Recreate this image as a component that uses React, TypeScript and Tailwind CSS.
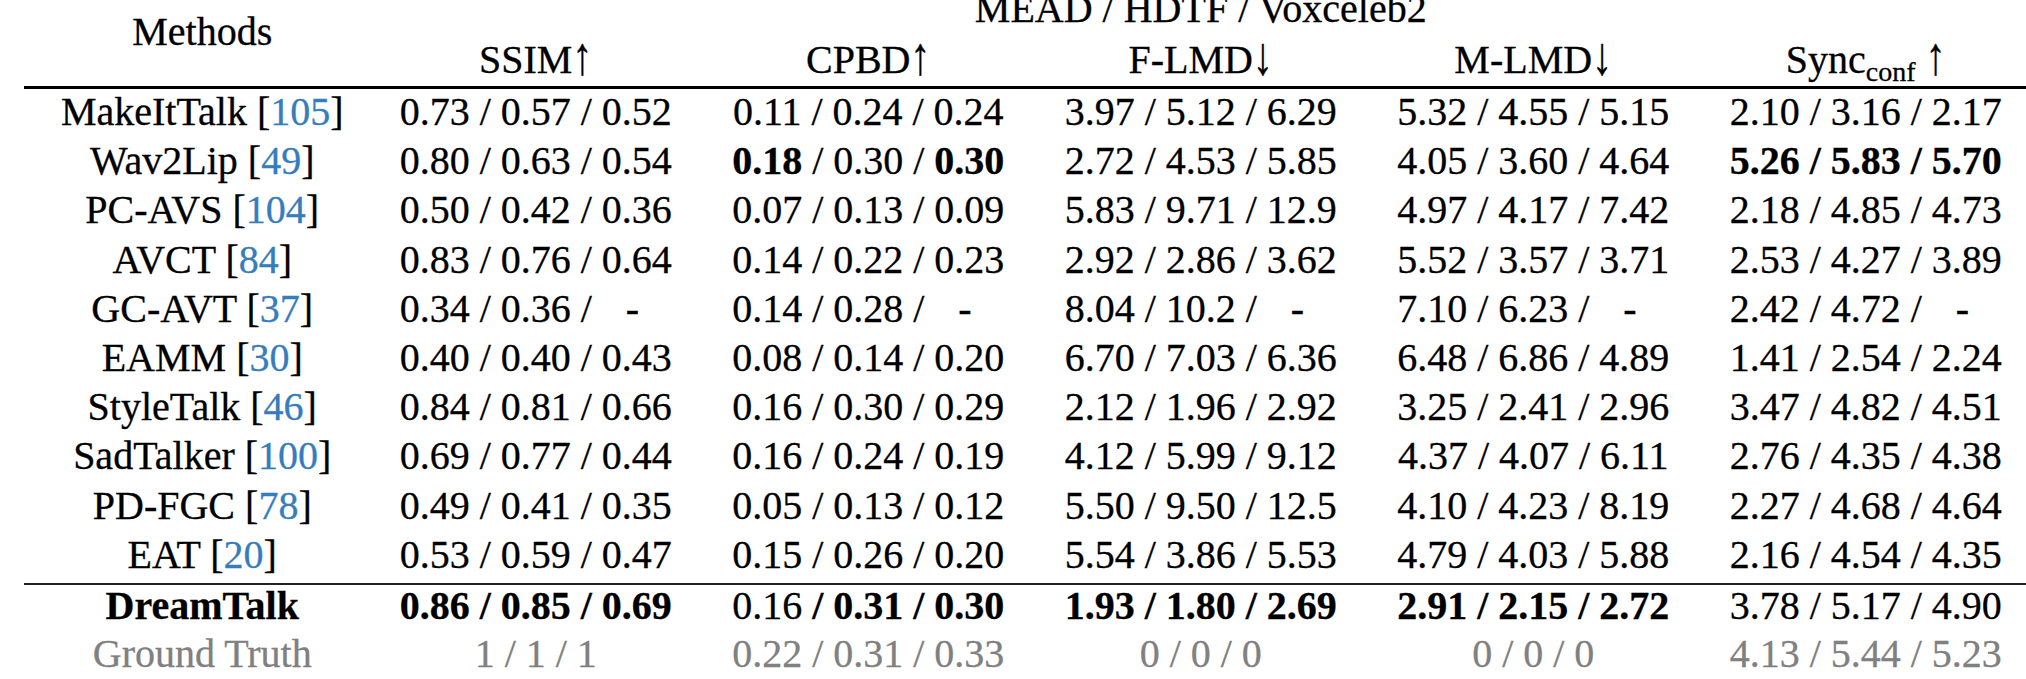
import React from 'react';

type Row = {
  name: string;
  cite?: string;
  cells: string[];
};

// "**" toggles bold inside a cell, a trailing " -" is a missing value
const rows: Row[] = [
  { name: 'MakeItTalk', cite: '105', cells: ['0.73 / 0.57 / 0.52', '0.11 / 0.24 / 0.24', '3.97 / 5.12 / 6.29', '5.32 / 4.55 / 5.15', '2.10 / 3.16 / 2.17'] },
  { name: 'Wav2Lip', cite: '49', cells: ['0.80 / 0.63 / 0.54', '**0.18** / 0.30 / **0.30**', '2.72 / 4.53 / 5.85', '4.05 / 3.60 / 4.64', '**5.26 / 5.83 / 5.70**'] },
  { name: 'PC-AVS', cite: '104', cells: ['0.50 / 0.42 / 0.36', '0.07 / 0.13 / 0.09', '5.83 / 9.71 / 12.9', '4.97 / 4.17 / 7.42', '2.18 / 4.85 / 4.73'] },
  { name: 'AVCT', cite: '84', cells: ['0.83 / 0.76 / 0.64', '0.14 / 0.22 / 0.23', '2.92 / 2.86 / 3.62', '5.52 / 3.57 / 3.71', '2.53 / 4.27 / 3.89'] },
  { name: 'GC-AVT', cite: '37', cells: ['0.34 / 0.36 / -', '0.14 / 0.28 / -', '8.04 / 10.2 / -', '7.10 / 6.23 / -', '2.42 / 4.72 / -'] },
  { name: 'EAMM', cite: '30', cells: ['0.40 / 0.40 / 0.43', '0.08 / 0.14 / 0.20', '6.70 / 7.03 / 6.36', '6.48 / 6.86 / 4.89', '1.41 / 2.54 / 2.24'] },
  { name: 'StyleTalk', cite: '46', cells: ['0.84 / 0.81 / 0.66', '0.16 / 0.30 / 0.29', '2.12 / 1.96 / 2.92', '3.25 / 2.41 / 2.96', '3.47 / 4.82 / 4.51'] },
  { name: 'SadTalker', cite: '100', cells: ['0.69 / 0.77 / 0.44', '0.16 / 0.24 / 0.19', '4.12 / 5.99 / 9.12', '4.37 / 4.07 / 6.11', '2.76 / 4.35 / 4.38'] },
  { name: 'PD-FGC', cite: '78', cells: ['0.49 / 0.41 / 0.35', '0.05 / 0.13 / 0.12', '5.50 / 9.50 / 12.5', '4.10 / 4.23 / 8.19', '2.27 / 4.68 / 4.64'] },
  { name: 'EAT', cite: '20', cells: ['0.53 / 0.59 / 0.47', '0.15 / 0.26 / 0.20', '5.54 / 3.86 / 5.53', '4.79 / 4.03 / 5.88', '2.16 / 4.54 / 4.35'] },
];

const ours: Row = {
  name: 'DreamTalk',
  cells: ['**0.86 / 0.85 / 0.69**', '0.16 **/ 0.31 / 0.30**', '**1.93 / 1.80 / 2.69**', '**2.91 / 2.15 / 2.72**', '3.78 / 5.17 / 4.90'],
};

const truth: Row = {
  name: 'Ground Truth',
  cells: ['1 / 1 / 1', '0.22 / 0.31 / 0.33', '0 / 0 / 0', '0 / 0 / 0', '4.13 / 5.44 / 5.23'],
};

const cols = 'grid grid-cols-[334.5px_repeat(5,332.5px)] ml-[35px]';

function Cell({ value }: { value: string }) {
  const missing = value.endsWith(' -');
  const text = missing ? value.slice(0, -1) : value;
  return (
    <div className="text-center whitespace-pre">
      {text.split('**').map((part, i) =>
        i % 2 === 1 ? (
          <span key={i} className="font-bold">{part}</span>
        ) : (
          <span key={i}>{part}</span>
        )
      )}
      {missing && <span className="inline-block w-[70px] pl-[24px] text-left">-</span>}
    </div>
  );
}

function Arrow({ up }: { up?: boolean }) {
  return <span className="inline-block scale-y-[1.35] origin-[50%_70%]">{up ? '↑' : '↓'}</span>;
}

function TableRow({ row, className, nameClass }: { row: Row; className: string; nameClass?: string }) {
  return (
    <div className={`${cols} ${className}`}>
      <div className={`text-center whitespace-pre ${nameClass ?? ''}`}>
        {row.name}
        {row.cite && (
          <>
            {' ['}
            <span className="text-[#367dbd]">{row.cite}</span>
            {']'}
          </>
        )}
      </div>
      {row.cells.map((c, i) => (
        <Cell key={i} value={c} />
      ))}
    </div>
  );
}

export default function App() {
  return (
    <div className="w-[2026px] h-[679px] overflow-hidden bg-white text-black text-[40px] font-['Liberation_Serif',serif] [-webkit-text-stroke:0.3px]">
      {/* header */}
      <div className={`${cols} grid-rows-[18px_68px] h-[86px]`}>
        <div className="row-span-2 text-center leading-[63px]">Methods</div>
        <div className="col-span-5 text-center leading-[18px]">MEAD / HDTF / Voxceleb2</div>
        <div className="pt-[17px] leading-[50px] text-center">SSIM<Arrow up /></div>
        <div className="pt-[17px] leading-[50px] text-center">CPBD<Arrow up /></div>
        <div className="pt-[17px] leading-[50px] text-center">F-LMD<Arrow /></div>
        <div className="pt-[17px] leading-[50px] text-center">M-LMD<Arrow /></div>
        <div className="pt-[17px] leading-[50px] text-center whitespace-pre">
          Sync<span className="relative top-[8px] text-[28px]">conf</span> <Arrow up />
        </div>
      </div>

      <div className="ml-[24px] h-[3px] bg-black" />

      <div className="-mt-[2px]">
        {rows.map((r) => (
          <TableRow key={r.name} row={r} className="h-[49.2px] leading-[49.2px]" />
        ))}
      </div>

      <div className="mt-[4px] ml-[24px] h-[2px] bg-[#222]" />

      <TableRow row={ours} className="h-[42px] leading-[42px]" nameClass="font-bold" />
      <TableRow row={truth} className="h-[54px] leading-[54px] text-[#808080]" />
    </div>
  );
}
